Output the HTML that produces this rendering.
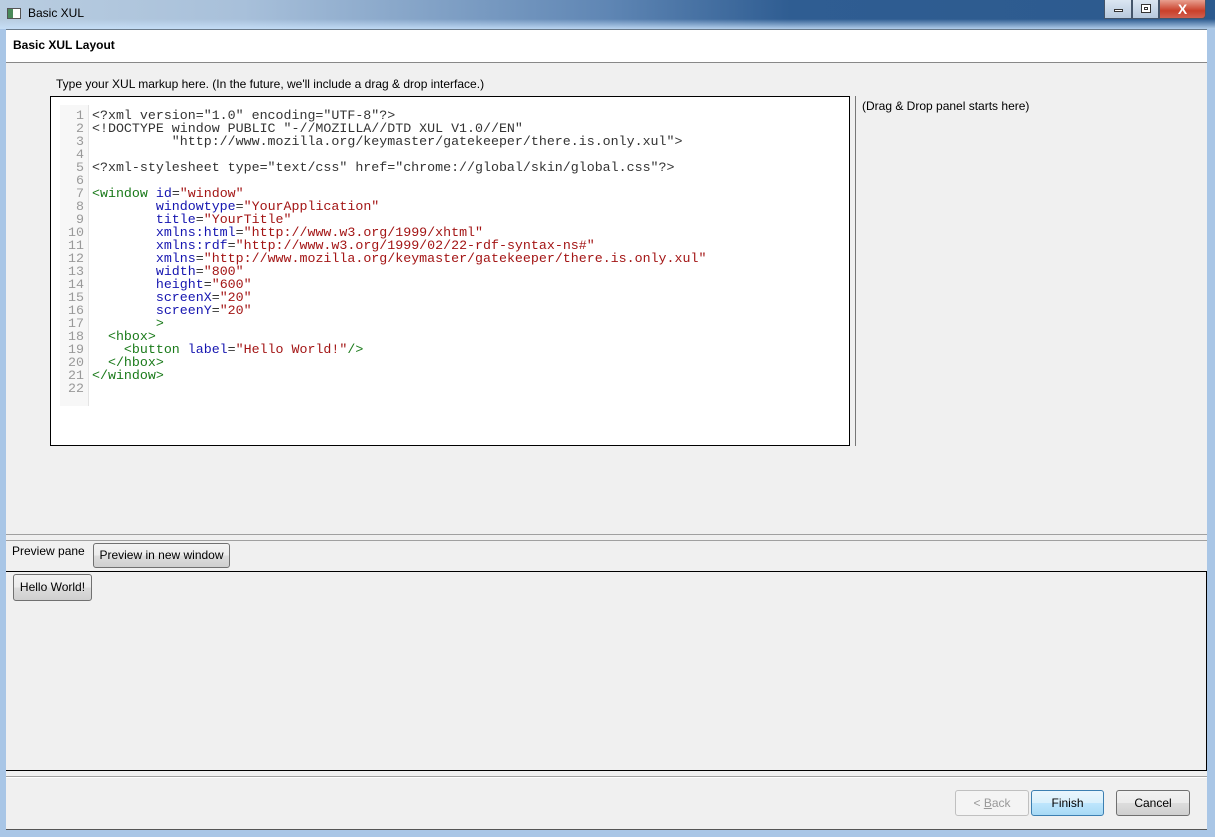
<!DOCTYPE html>
<html><head><meta charset="utf-8"><style>
*{margin:0;padding:0;box-sizing:border-box}
body{width:1215px;height:837px;overflow:hidden;background:#a9c6e6;font-family:"Liberation Sans",sans-serif;font-size:12px;color:#000;position:relative}
.tb{position:absolute;left:0;top:0;width:1215px;height:29px;background:linear-gradient(90deg,#b9cde0 0%,#a8c0da 20%,#5f86b4 50%,#2f5d92 65%,#2c5a8e 100%)}
.tb:after{content:"";position:absolute;left:0;right:0;bottom:0;height:10px;background:linear-gradient(180deg,rgba(255,255,255,0),rgba(200,225,250,.85))}
.ttl{position:absolute;left:28px;top:6px;font-size:12px;color:#000;z-index:2}
.ico{position:absolute;left:7px;top:8px;width:14px;height:11px;border:1px solid #555;background:linear-gradient(90deg,#4a8a5a 40%,#fff 40%);z-index:2}
.wb{position:absolute;top:0;height:19px;border:1px solid #44556a;border-top:none;z-index:2}
.hdr{position:absolute;left:6px;top:29px;width:1201px;height:34px;background:#fff;border-top:1px solid #6a7a8a;border-bottom:1px solid #888}
.hdr b{position:absolute;left:7px;top:8px;font-size:12px}
.main{position:absolute;left:6px;top:63px;width:1201px;height:767px;background:#f0f0f0}
.lbl{position:absolute;font-size:12px}
.ed{position:absolute;left:50px;top:96px;width:800px;height:350px;background:#fff;border:1px solid #000}
.gut{position:absolute;left:9px;top:8px;width:29px;height:301px;background:#f7f7f7;border-right:1px solid #e4e4e4}
pre{font-family:"Liberation Mono",monospace;font-size:13.3px;line-height:13px;position:absolute;top:12px}
.ln{left:9px;width:24px;text-align:right;color:#999}
.code{left:41px;color:#333}
.g{color:#1a7a1a}.b{color:#1515b0}.r{color:#a31515}
.vl{position:absolute;left:855px;top:96px;width:1px;height:350px;background:#777}
.btn{position:absolute;border:1px solid #707070;border-radius:3px;background:linear-gradient(#f2f2f2 0%,#ebebeb 50%,#dddddd 50%,#cfcfcf 100%);text-align:center;font-size:12px}
</style></head><body>
<div class="tb"></div>
<div class="ico"></div><div class="ttl">Basic XUL</div>
<div class="wb" style="left:1104px;width:28px;background:linear-gradient(#dbe6f2,#b7c9dd)"><div style="position:absolute;left:9px;top:9px;width:9px;height:3px;background:#fff;border:1px solid #333"></div></div>
<div class="wb" style="left:1132px;width:27px;background:linear-gradient(#dbe6f2,#b7c9dd)"><div style="position:absolute;left:8px;top:4px;width:10px;height:9px;border:1px solid #333;background:#fff"><div style="margin:2px;height:3px;border:1px solid #333"></div></div></div>
<div class="wb" style="left:1159px;width:47px;background:linear-gradient(#e8a090,#c9402a 60%,#d06050);color:#fff;font-weight:bold;font-size:14px;text-align:center;line-height:18px;border-radius:0 0 4px 0">X</div>
<div class="hdr"><b>Basic XUL Layout</b></div>
<div class="main"></div>
<div class="lbl" style="left:56px;top:77px">Type your XUL markup here. (In the future, we'll include a drag &amp; drop interface.)</div>
<div class="lbl" style="left:862px;top:99px">(Drag &amp; Drop panel starts here)</div>
<div class="ed"><div class="gut"></div>
<pre class="ln">1
2
3
4
5
6
7
8
9
10
11
12
13
14
15
16
17
18
19
20
21
22</pre>
<pre class="code">&lt;?xml version="1.0" encoding="UTF-8"?&gt;
&lt;!DOCTYPE window PUBLIC "-//MOZILLA//DTD XUL V1.0//EN"
          "http://www.mozilla.org/keymaster/gatekeeper/there.is.only.xul"&gt;

&lt;?xml-stylesheet type="text/css" href="chrome://global/skin/global.css"?&gt;

<span class="g">&lt;window</span> <span class="b">id</span>=<span class="r">"window"</span>
        <span class="b">windowtype</span>=<span class="r">"YourApplication"</span>
        <span class="b">title</span>=<span class="r">"YourTitle"</span>
        <span class="b">xmlns:html</span>=<span class="r">"http://www.w3.org/1999/xhtml"</span>
        <span class="b">xmlns:rdf</span>=<span class="r">"http://www.w3.org/1999/02/22-rdf-syntax-ns#"</span>
        <span class="b">xmlns</span>=<span class="r">"http://www.mozilla.org/keymaster/gatekeeper/there.is.only.xul"</span>
        <span class="b">width</span>=<span class="r">"800"</span>
        <span class="b">height</span>=<span class="r">"600"</span>
        <span class="b">screenX</span>=<span class="r">"20"</span>
        <span class="b">screenY</span>=<span class="r">"20"</span>
        <span class="g">&gt;</span>
  <span class="g">&lt;hbox&gt;</span>
    <span class="g">&lt;button</span> <span class="b">label</span>=<span class="r">"Hello World!"</span><span class="g">/&gt;</span>
  <span class="g">&lt;/hbox&gt;</span>
<span class="g">&lt;/window&gt;</span>
</pre></div>
<div class="vl"></div>
<div style="position:absolute;left:6px;top:534px;width:1201px;height:1px;background:#a0a0a0"></div>
<div style="position:absolute;left:6px;top:540px;width:1201px;height:1px;background:#a0a0a0"></div>
<div class="lbl" style="left:12px;top:544px">Preview pane</div>
<div class="btn" style="left:93px;top:543px;width:137px;height:25px;line-height:23px">Preview in new window</div>
<div style="position:absolute;left:6px;top:571px;width:1201px;height:200px;border:1px solid #000;border-left:none"></div>
<div class="btn" style="left:13px;top:574px;width:79px;height:27px;line-height:25px">Hello World!</div>
<div style="position:absolute;left:6px;top:776px;width:1201px;height:1px;background:#a0a0a0"></div>
<div style="position:absolute;left:6px;top:777px;width:1201px;height:1px;background:#fff"></div>
<div class="btn" style="left:955px;top:790px;width:74px;height:26px;line-height:24px;color:#999;border-color:#c0c0c0;background:#f4f4f4">&lt; <u>B</u>ack</div>
<div class="btn" style="left:1031px;top:790px;width:73px;height:26px;line-height:24px;border-color:#3c7fb1;background:linear-gradient(#eaf6fd,#d9f0fc 50%,#bee6fd 50%,#a7d9f5)">Finish</div>
<div class="btn" style="left:1116px;top:790px;width:74px;height:26px;line-height:24px">Cancel</div>
<div style="position:absolute;left:6px;top:829px;width:1201px;height:1px;background:#555"></div>
</body></html>
